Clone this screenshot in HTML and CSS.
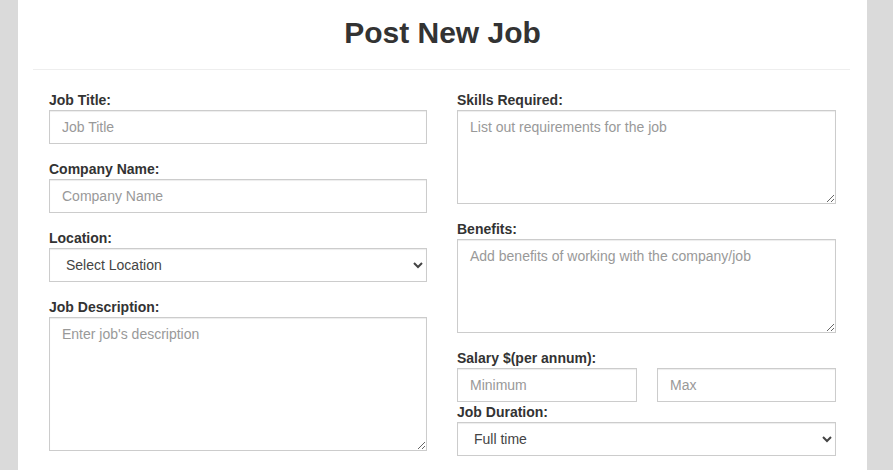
FILE: index.html
```html
<!DOCTYPE html>
<html lang="en">
<head>
<meta charset="utf-8">
<title>Post New Job</title>
<link rel="stylesheet" href="styles.css">
</head>
<body>
<div class="card">
  <h1 class="title">Post New Job</h1>
  <hr class="divider">
  <form class="form">
    <div class="col">
      <div class="group">
        <label class="label" for="title">Job Title:</label>
        <input class="control" id="title" type="text" placeholder="Job Title">
      </div>
      <div class="group">
        <label class="label" for="company">Company Name:</label>
        <input class="control" id="company" type="text" placeholder="Company Name">
      </div>
      <div class="group">
        <label class="label" for="location">Location:</label>
        <select class="control select" id="location">
          <option>Select Location</option>
        </select>
      </div>
      <div class="group">
        <label class="label" for="desc">Job Description:</label>
        <textarea class="control area area-tall" id="desc" placeholder="Enter job's description"></textarea>
      </div>
    </div>
    <div class="col">
      <div class="group">
        <label class="label" for="skills">Skills Required:</label>
        <textarea class="control area" id="skills" placeholder="List out requirements for the job"></textarea>
      </div>
      <div class="group">
        <label class="label" for="benefits">Benefits:</label>
        <textarea class="control area" id="benefits" placeholder="Add benefits of working with the company/job"></textarea>
      </div>
      <div class="group group-tight">
        <label class="label" for="min">Salary $(per annum):</label>
        <div class="pair">
          <input class="control" id="min" type="text" placeholder="Minimum">
          <input class="control" id="max" type="text" placeholder="Max">
        </div>
      </div>
      <div class="group">
        <label class="label" for="duration">Job Duration:</label>
        <select class="control select" id="duration">
          <option>Full time</option>
        </select>
      </div>
    </div>
  </form>
</div>
</body>
</html>
```

FILE: styles.css
```css
html, body {
  margin: 0;
  padding: 0;
  background: #dadada;
  font-family: "Liberation Sans", Arial, sans-serif;
  color: #333;
}

.card {
  margin-left: 18px;
  width: 849px;
  box-sizing: border-box;
  background: #fff;
  padding: 16px 17px 40px 15px;
  min-height: 470px;
}

.title {
  margin: 0;
  font-size: 30px;
  line-height: 34px;
  font-weight: bold;
  text-align: center;
  color: #333;
  padding-left: 2px;
}

.divider {
  margin: 19px 0 0;
  border: 0;
  border-top: 1px solid #eee;
  height: 0;
}

.form {
  display: grid;
  grid-template-columns: 378px 379px;
  column-gap: 30px;
  padding: 22px 14px 0 16px;
}

.col {
  display: flex;
  flex-direction: column;
  min-width: 0;
}

.group {
  margin-bottom: 17px;
}

.group-tight {
  margin-bottom: 2px;
}

.label {
  display: block;
  font-size: 14px;
  line-height: 16px;
  font-weight: bold;
  color: #333;
  margin-bottom: 2px;
}

.control {
  display: block;
  width: 100%;
  box-sizing: border-box;
  height: 34px;
  padding: 6px 12px;
  margin: 0;
  font-family: "Liberation Sans", Arial, sans-serif;
  font-size: 14px;
  line-height: 20px;
  color: #555;
  background: #fff;
  border: 1px solid #ccc;
  border-radius: 0;
  box-shadow: inset 0 1px 1px rgba(0, 0, 0, 0.075);
}

.control::placeholder {
  color: #999;
  opacity: 1;
}

.select {
  color: #444;
}

.area {
  height: 94px;
  resize: vertical;
}

.area-tall {
  height: 134px;
}

.pair {
  display: grid;
  grid-template-columns: 180px 1fr;
  column-gap: 20px;
}
```
